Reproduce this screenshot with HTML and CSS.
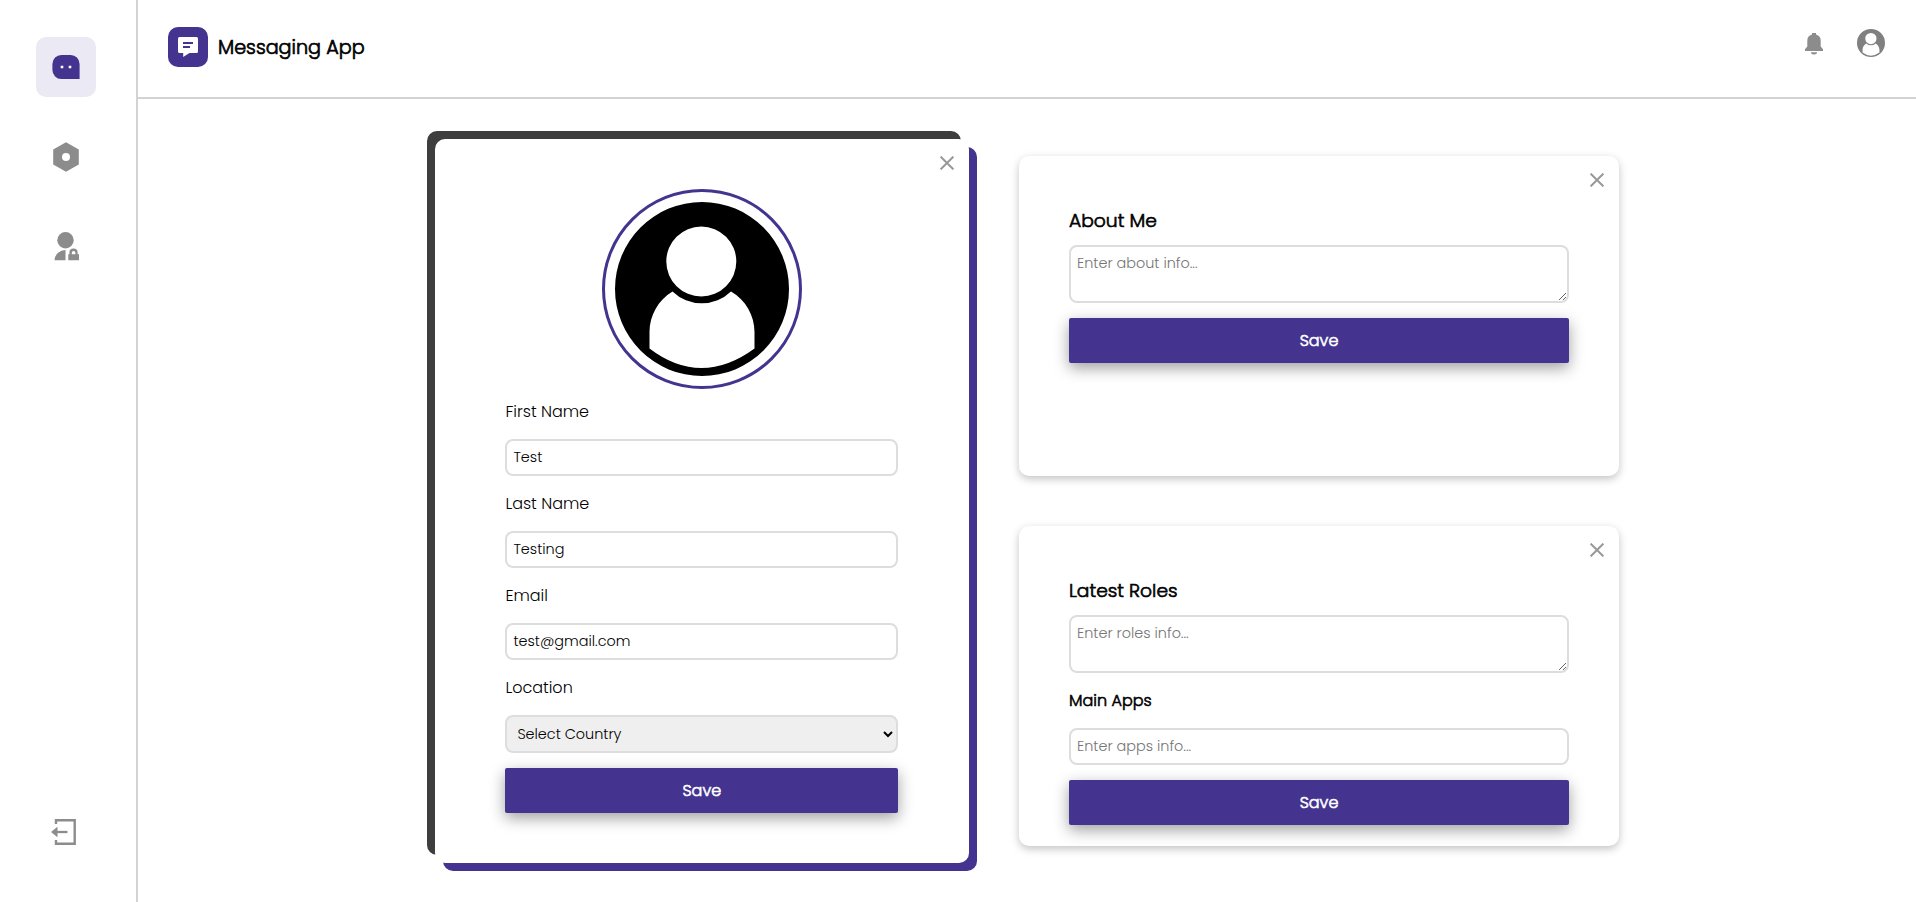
FILE: index.html
```html
<!DOCTYPE html>
<html lang="en">
<head>
<meta charset="utf-8">
<title>Messaging App</title>
<link rel="stylesheet" href="styles.css">
</head>
<body>
<div class="app">
  <nav class="sidebar">
    <a class="nav-item active"><svg width="28" height="24" viewBox="0 0 28 24"><path d="M9.500 0h9A9 9 0 0 1 27.600 9V24H9.500A9 9 0 0 1 .4 15V9A9 9 0 0 1 9.500 0Z" fill="#443490"/><path d="M8.700 10.700h2.600v2.600H8.700zM16.700 10.700h2.600v2.600h-2.600z" fill="#fff"/></svg></a>
    <a class="nav-item"><svg width="26" height="30" viewBox="0 0 26 30"><path fill-rule="evenodd" d="M13 .2 25.800 7.600V22.400L13 29.800.2 22.400V7.600ZM13 11a4 4 0 1 0 0 8 4 4 0 0 0 0-8Z" fill="#8c8c8c"/></svg></a>
    <a class="nav-item"><svg class="nudge" width="26" height="29" viewBox="0 0 26 29"><circle cx="11.500" cy="8.300" r="8.200" fill="#8c8c8c"/><path d="M.5 28.300A11 10.500 0 0 1 11.500 18v10.300ZM14.300 22.300H15.400V20.500a4 4 0 0 1 8.200 0v1.800H25v6H14.300ZM17.800 22.300h3.600V20.800a1.800 1.800 0 0 0-3.600 0Z" fill="#8c8c8c" fill-rule="evenodd"/></svg></a>
    <a class="nav-item logout"><svg width="26" height="28" viewBox="0 0 26 28"><path d="M5 6V2.200H23.700V25.800H5V22" fill="none" stroke="#8c8c8c" stroke-width="2.400"/><path d="M6 14H16.500" stroke="#8c8c8c" stroke-width="2.300"/><path d="M0 14 6.500 8.800V19.200Z" fill="#8c8c8c"/></svg></a>
  </nav>
  <div class="page">
    <header class="topbar">
      <div class="brand">
        <span class="logo"><svg width="20" height="20" viewBox="0 0 20 20"><path d="M1.500 0h17A1.500 1.500 0 0 1 20 1.500v13a1.500 1.500 0 0 1-1.500 1.500H11.500L5.200 20V16H1.500A1.500 1.500 0 0 1 0 14.500v-13A1.500 1.500 0 0 1 1.500 0Z" fill="#fff"/><path d="M5 6H15M5 10H12" stroke="#443490" stroke-width="2"/></svg></span>
        <span class="brand-name">Messaging App</span>
      </div>
      <div class="actions">
        <svg class="bell" width="18" height="22" viewBox="0 0 18 22"><path d="M7 0h4v1.600A6.500 6.500 0 0 1 15.700 8v5.500L18 16.300V18H0V16.300L2.300 13.500V8A6.500 6.500 0 0 1 7 1.600ZM6 19.300h6a3 2.200 0 0 1-6 0Z" fill="#8c8c8c"/></svg>
        <svg width="28" height="28" viewBox="0 0 174 174"><use href="#person" fill="#808080"/></svg>
      </div>
    </header>
    <main class="content">
      <section class="card profile">
        <svg class="close" width="14" height="14" viewBox="0 0 14 14"><path d="M.6.6 13.400 13.400M13.400.6.6 13.400"/></svg>
        <div class="avatar"><svg width="174" height="174" viewBox="0 0 174 174"><g id="person"><path fill-rule="evenodd" d="M87 0a87 87 0 1 1 0 174A87 87 0 0 1 87 0ZM86.300 24.500a35 35 0 1 0 0 70 35 35 0 0 0 0-70ZM57.500 89.500C43 98 34.500 114 34.500 130V146.500Q60 166 86.500 166T139.500 146.500V130C139.500 114 131 98 116 89.500A42 42 0 0 1 57.500 89.500Z"/></g></svg></div>
        <label class="label">First Name</label>
        <input class="field" value="Test">
        <label class="label">Last Name</label>
        <input class="field" value="Testing">
        <label class="label">Email</label>
        <input class="field email" value="test@gmail.com">
        <label class="label">Location</label>
        <select class="field select"><option>Select Country</option></select>
        <button class="save">Save</button>
      </section>
      <div class="column">
        <section class="card panel">
          <svg class="close" width="14" height="14" viewBox="0 0 14 14"><path d="M.6.6 13.400 13.400M13.400.6.6 13.400"/></svg>
          <h2 class="heading">About Me</h2>
          <textarea class="field area" placeholder="Enter about info..."></textarea>
          <button class="save">Save</button>
        </section>
        <section class="card panel">
          <svg class="close" width="14" height="14" viewBox="0 0 14 14"><path d="M.6.6 13.400 13.400M13.400.6.6 13.400"/></svg>
          <h2 class="heading">Latest Roles</h2>
          <textarea class="field area" placeholder="Enter roles info..."></textarea>
          <h3 class="subheading">Main Apps</h3>
          <input class="field" placeholder="Enter apps info...">
          <button class="save">Save</button>
        </section>
      </div>
    </main>
  </div>
</div>
</body>
</html>
```
FILE: styles.css
```css
* { box-sizing: border-box; }
body {
  margin: 0;
  background: #fff;
  color: #000;
  font-family: Poppins, Inter, "Open Sans", sans-serif;
  font-weight: 300;
  overflow: hidden;
}
input, select, textarea, button { font: inherit; }
.app { display: flex; height: 902px; }
.sidebar {
  width: 138px;
  flex: none;
  border-right: 2px solid #d3d3d3;
  padding: 37px 0 40px 36px;
  display: flex;
  flex-direction: column;
  gap: 30px;
}
.nav-item {
  width: 60px;
  height: 60px;
  border-radius: 10px;
  display: flex;
  align-items: center;
  justify-content: center;
}
.active { background: #ebe9f4; }
.nudge { margin: -1px 0 0 2px; }
.logout { margin-top: auto; padding-right: 4px; }
.page { flex: 1; }
.topbar {
  height: 99px;
  border-bottom: 2px solid #d3d3d3;
  padding: 27px 31px 0 30px;
  display: flex;
  justify-content: space-between;
  align-items: flex-start;
}
.brand { display: flex; align-items: center; gap: 10px; }
.logo {
  width: 40px;
  height: 40px;
  border-radius: 10px;
  background: #443490;
  display: flex;
  align-items: center;
  justify-content: center;
}
.brand-name { font-size: 19.2px; -webkit-text-stroke: .7px currentColor; }
.actions { display: flex; align-items: center; gap: 34px; padding-top: 2px; }
.bell { margin-top: 2px; }
.content { display: flex; gap: 50px; padding: 40px 0 0 297px; }
.card { position: relative; background: #fff; border-radius: 10px; display: flex; flex-direction: column; }
.close { position: absolute; top: 17px; right: 15px; stroke: #999; stroke-width: 2; }
.profile {
  width: 534px;
  height: 724px;
  padding: 50px 70.8px 0 70.4px;
  box-shadow: -8px -8px 0 #3e3e3e, 8px 8px 0 #443490;
}
.avatar {
  width: 200px;
  height: 200px;
  border: 3px solid #443490;
  border-radius: 50%;
  align-self: center;
  display: flex;
  align-items: center;
  justify-content: center;
}
.label { font-size: 16px; line-height: 24px; margin: 11px 0 15px; }
.field + .label { margin-top: 16px; }
.field {
  width: 100%;
  height: 37px;
  border: 2px solid #ddd;
  border-radius: 8px;
  padding: 0 6px;
  background: #fff;
  color: #000;
  font-size: 14.4px;
  margin: 0;
}
.field::placeholder { color: #757575; }
.select { height: 38px; background: #efefef; padding: 0 0 0 6px; }
.save {
  height: 45px;
  flex: none;
  margin-top: 15px;
  border: 0;
  border-radius: 2px;
  background: #443490;
  color: #fff;
  font-size: 16px;
  -webkit-text-stroke: .6px currentColor;
  box-shadow: 0 5px 15px rgba(0, 0, 0, .38);
}
.column { display: flex; flex-direction: column; gap: 50px; padding-top: 17px; }
.panel {
  width: 600px;
  height: 320px;
  padding: 51px 50px 0;
  box-shadow: 0 3px 8px rgba(0, 0, 0, .24);
}
.heading { font-size: 18.72px; font-weight: 300; -webkit-text-stroke: .65px currentColor; line-height: 28px; margin: 0 0 10px; }
.area { height: 58px; flex: none; padding: 6px 6px; }
.subheading { font-size: 16px; font-weight: 300; -webkit-text-stroke: .6px currentColor; line-height: 24px; margin: 16px 0 15px; }
```
